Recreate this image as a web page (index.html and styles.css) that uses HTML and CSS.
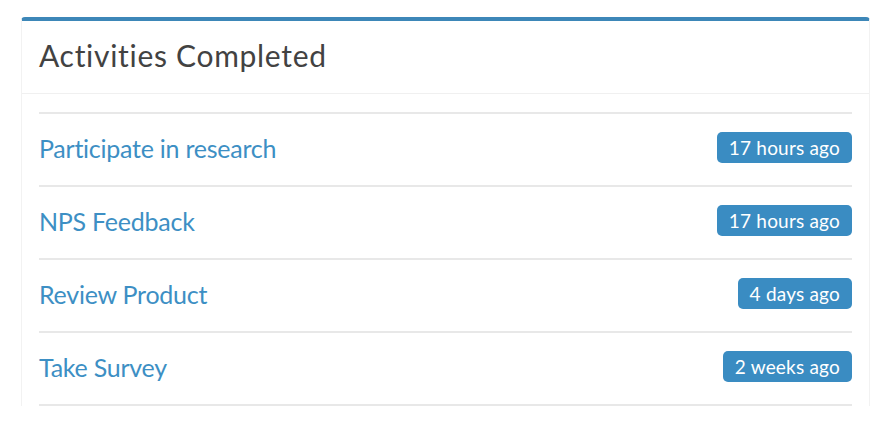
FILE: index.html
```html
<!DOCTYPE html>
<html>
<head>
<meta charset="utf-8">
<link rel="stylesheet" href="styles.css">
</head>
<body>
<div class="card">
  <div class="card-header"><h2 class="title">Activities Completed</h2></div>
  <div class="card-body">
    <ul class="list">
      <li class="item"><a class="link" href="#">Participate in research</a><span class="badge">17 hours ago</span></li>
      <li class="item"><a class="link" href="#">NPS Feedback</a><span class="badge">17 hours ago</span></li>
      <li class="item"><a class="link" href="#">Review Product</a><span class="badge">4 days ago</span></li>
      <li class="item"><a class="link" href="#">Take Survey</a><span class="badge">2 weeks ago</span></li>
    </ul>
  </div>
</div>
</body>
</html>
```
FILE: styles.css
```css
html, body { margin: 0; padding: 0; background: #fff; }
body { font-family: Lato, "Open Sans", sans-serif; padding: 17px 17px 0 21px; }
.card {
  border-top: 4px solid #3d87b8;
  border-radius: 4px 4px 0 0;
  border-left: 1px solid #f2f2f2;
  border-right: 1px solid #f2f2f2;
  width: 849px;
  box-sizing: border-box;
}
.card-header {
  height: 73px;
  border-bottom: 1px solid #f0f0f0;
  display: flex;
  align-items: center;
  padding: 0 0 4px 17px;
  box-sizing: border-box;
}
.title {
  margin: 0;
  font-weight: 400;
  font-size: 30px;
  color: #424242;
  letter-spacing: 0.7px;
}
.card-body { padding: 18px 17px 0 17px; }
.list { list-style: none; margin: 0; padding: 0; border-top: 2px solid #e8e8e8; }
.item {
  height: 73px;
  box-sizing: border-box;
  border-bottom: 2px solid #e8e8e8;
  display: flex;
  align-items: center;
  justify-content: space-between;
}
.link {
  color: #3d8fc4;
  text-decoration: none;
  font-size: 25px;
  letter-spacing: -0.25px;
  padding-bottom: 4px;
}
.badge {
  background: #3a8cc2;
  color: #fff;
  font-size: 19px;
  letter-spacing: 0.2px;
  border-radius: 5px;
  height: 31px;
  line-height: 31px;
  padding: 0 12px;
  margin-bottom: 4px;
}
```
